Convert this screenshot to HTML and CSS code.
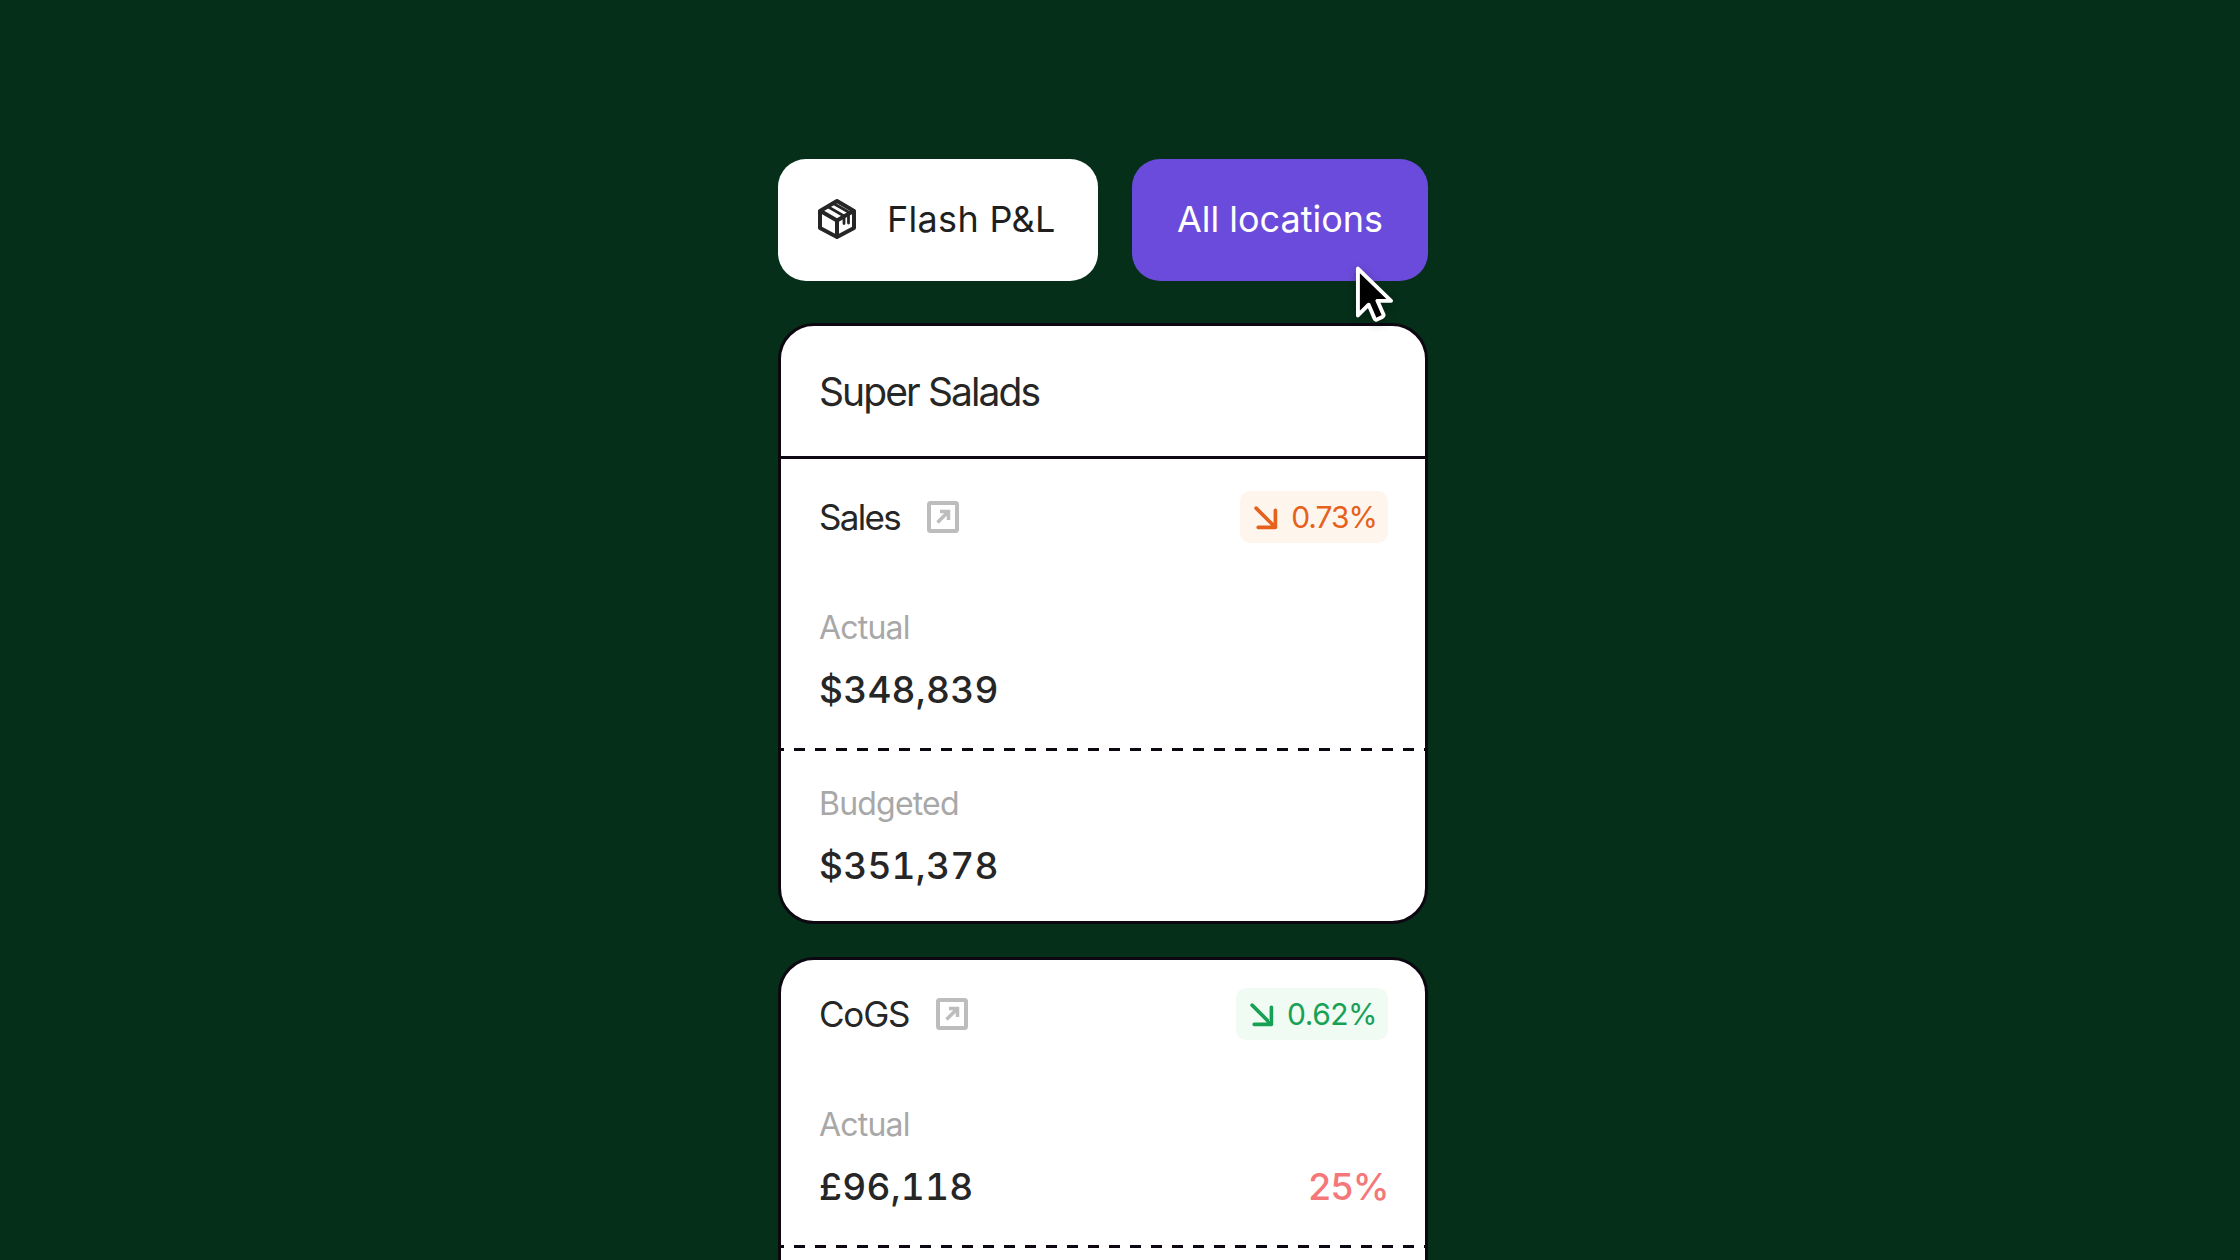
FILE: index.html
```html
<!DOCTYPE html>
<html lang="en">
<head>
<meta charset="utf-8">
<title>Flash P&amp;L</title>
<link rel="stylesheet" href="styles.css">
</head>
<body>
<main class="stage">
  <div class="tabs">
    <div class="tab tab-white">
      <svg class="box-icon" viewBox="0 0 38 40" fill="none" stroke="#262626" stroke-width="4" stroke-linejoin="round" stroke-linecap="round">
        <path d="M19 2 36 12V29L19 38 2 29V12Z"/>
        <path d="M2.500 12 19 21.500 35.500 12M19 21.500V37.500"/>
        <path d="M9.500 7.500 26 17V24.500M15.500 4.500 30.500 13V24" stroke-width="2.800"/>
      </svg>
      <span class="tab-label">Flash P&amp;L</span>
    </div>
    <div class="tab tab-purple"><span>All locations</span></div>
    <svg class="cursor" viewBox="0 0 40 58">
      <path d="M3 3V51L14 40 20 54Q21 56 23 55L28 52.500Q30 51.500 29 49.500L23 36H37Z" fill="#000" stroke="#fff" stroke-width="4" stroke-linejoin="round"/>
    </svg>
  </div>

  <section class="card">
    <h1 class="card-title">Super Salads</h1>
    <div class="metric-head">
      <div class="metric-name">
        <span class="name-tight">Sales</span>
        <svg class="link-icon" viewBox="0 0 32 32" fill="none" stroke="#bdbdbd" stroke-width="4">
          <rect x="2" y="2" width="28" height="28" rx="1.500"/>
          <path d="M10.500 21.500 20.500 11.500M13 10.500H21.500V19" stroke-width="3.500"/>
        </svg>
      </div>
      <div class="badge badge-orange">
        <svg class="arrow" viewBox="0 0 24 24" fill="none" stroke="currentColor" stroke-width="3.500" stroke-linecap="round" stroke-linejoin="round"><path d="M3 3 21 21M21.500 5V21.500H5"/></svg>
        <span>0.73%</span>
      </div>
    </div>
    <div class="row row-actual">
      <div class="label">Actual</div>
      <div class="value">$348,839</div>
    </div>
    <div class="dash"></div>
    <div class="row row-budget">
      <div class="label">Budgeted</div>
      <div class="value">$351,378</div>
    </div>
  </section>

  <section class="card card-cut">
    <div class="metric-head">
      <div class="metric-name">
        <span>CoGS</span>
        <svg class="link-icon" viewBox="0 0 32 32" fill="none" stroke="#bdbdbd" stroke-width="4">
          <rect x="2" y="2" width="28" height="28" rx="1.500"/>
          <path d="M10.500 21.500 20.500 11.500M13 10.500H21.500V19" stroke-width="3.500"/>
        </svg>
      </div>
      <div class="badge badge-green">
        <svg class="arrow" viewBox="0 0 24 24" fill="none" stroke="currentColor" stroke-width="3.500" stroke-linecap="round" stroke-linejoin="round"><path d="M3 3 21 21M21.500 5V21.500H5"/></svg>
        <span>0.62%</span>
      </div>
    </div>
    <div class="row row-actual">
      <div class="label">Actual</div>
      <div class="value-line">
        <div class="value">£96,118</div>
        <div class="value value-red">25%</div>
      </div>
    </div>
    <div class="dash"></div>
    <div class="row row-budget"></div>
  </section>
</main>
</body>
</html>
```
FILE: styles.css
```css
* { box-sizing: border-box; }
html, body { margin: 0; height: 100%; overflow: hidden; }
body {
  background: #052f18;
  font-family: Inter, "Liberation Sans", sans-serif;
  color: #262626;
}
.stage {
  width: 486px;
  margin-left: 778px;
  padding-top: 159px;
  display: flex;
  flex-direction: column;
}
.tabs {
  position: relative;
  display: flex;
  gap: 34px;
  height: 122px;
  margin-bottom: 42px;
}
.tab {
  display: flex;
  align-items: center;
  height: 122px;
  border-radius: 28px;
  font-size: 36px;
  padding-bottom: 2px;
}
.tab-white {
  width: 320px;
  background: #fff;
  padding-left: 40px;
  gap: 31px;
  color: #1f1f1f;
}
.tab-label { letter-spacing: .3px; }
.tab-purple {
  width: 296px;
  margin-right: -166px;
  background: #6b4bdb;
  color: #fff;
  justify-content: center;
}
.box-icon { width: 38px; height: 40px; flex: none; }
.cursor {
  position: absolute;
  left: 577px;
  top: 106px;
  width: 39px;
  height: 58px;
  filter: drop-shadow(0 3px 4px rgba(0,0,0,.3));
}
.card {
  width: 650px;
  background: #fff;
  border: 3px solid #0d0712;
  border-radius: 36px;
  overflow: hidden;
}
.card + .card { margin-top: 33px; }
.card-title {
  margin: 0;
  height: 133px;
  padding: 0 38px;
  display: flex;
  align-items: center;
  font-size: 39px;
  font-weight: 400;
  letter-spacing: -1.900px;
  border-bottom: 3px solid #0d0712;
}
.metric-head {
  display: flex;
  justify-content: space-between;
  align-items: center;
  height: 106px;
  margin: 5px 0 4px;
  padding: 0 37px 0 38px;
}
.card-cut .metric-head { margin-top: 1px; }
.metric-name {
  display: flex;
  align-items: center;
  gap: 27px;
  font-size: 35px;
  letter-spacing: -1.200px;
}
.name-tight { letter-spacing: -1.700px; }
.link-icon { width: 32px; height: 32px; flex: none; }
.badge {
  display: flex;
  align-items: center;
  gap: 13px;
  height: 52px;
  padding: 0 11px 0 13px;
  border-radius: 10px;
  font-size: 30px;
}
.badge-orange { background: #fef5ed; color: #e5611c; letter-spacing: -1px; }
.badge-green { background: #effbf3; color: #18a155; letter-spacing: -.5px; }
.arrow { width: 25px; height: 25px; flex: none; }
.row { padding: 0 38px; }
.row-actual {
  height: 174px;
  padding-top: 34px;
}
.dash {
  height: 3px;
  background: linear-gradient(90deg, #0d0712 11px, transparent 11px) 13px 0 / 21px 3px repeat-x;
}
.row-budget { padding-top: 33px; height: 170px; }
.label {
  font-size: 32px;
  line-height: 40px;
  letter-spacing: -.8px;
  color: #a8a8a8;
}
.value {
  margin-top: 20px;
  font-size: 37px;
  line-height: 44px;
  font-weight: 500;
  letter-spacing: .25px;
  font-variant-numeric: tabular-nums;
  color: #262626;
}
.value-line { display: flex; justify-content: space-between; margin-right: -1px; }
.value-red { color: #f4787a; letter-spacing: -1.500px; }
```
